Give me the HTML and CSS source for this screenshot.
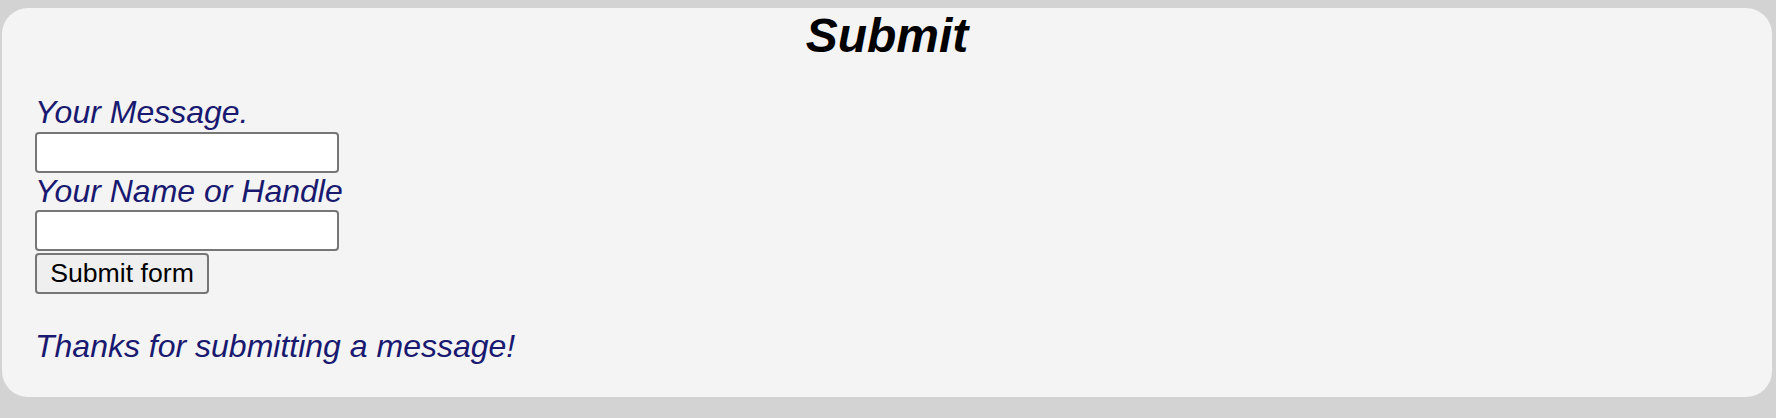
FILE: index.html
```html
<!DOCTYPE html>
<html lang="en">
<head>
<meta charset="utf-8">
<title>Submit</title>
<link rel="stylesheet" href="styles.css">
</head>
<body>
<main class="card">
  <h1 class="title">Submit</h1>
  <form class="form">
    <label class="label" for="msg">Your Message.</label>
    <input class="field field-first" id="msg" type="text">
    <label class="label" for="name">Your Name or Handle</label>
    <input class="field" id="name" type="text">
    <button class="btn" type="button">Submit form</button>
  </form>
  <p class="thanks">Thanks for submitting a message!</p>
</main>
</body>
</html>
```

FILE: styles.css
```css
html, body {
  margin: 0;
  padding: 0;
}
body {
  background: #d3d3d3;
  font-family: "Liberation Sans", Arial, sans-serif;
  padding: 8px 4px 21px 2px;
}
.card {
  background: #f4f4f4;
  border-radius: 26px;
  padding: 0 33px 32px 33px;
  height: 389px;
  box-sizing: border-box;
}
.title {
  margin: 0 0 31px 0;
  text-align: center;
  font-size: 48px;
  line-height: 55px;
  font-weight: bold;
  font-style: italic;
  color: #000;
}
.form {
  display: flex;
  flex-direction: column;
  align-items: flex-start;
}
.label {
  display: block;
  font-size: 32px;
  line-height: 37px;
  font-style: italic;
  color: #191970;
}
.field {
  box-sizing: border-box;
  width: 304px;
  height: 41px;
  margin: 0;
  border: 2px solid #767676;
  border-radius: 4px;
  background: #fff;
  padding: 2px 4px;
  font-size: 26px;
}
.field-first {
  margin-top: 1px;
}
.btn {
  box-sizing: border-box;
  margin-top: 2px;
  height: 41px;
  width: 174px;
  padding: 0 12px;
  border: 2px solid #767676;
  border-radius: 4px;
  background: #efefef;
  font-family: "Liberation Sans", Arial, sans-serif;
  font-size: 26.67px;
  color: #000;
  text-align: center;
}
.thanks {
  margin: 34px 0 0 0;
  font-size: 32px;
  line-height: 37px;
  font-style: italic;
  color: #191970;
}
```
